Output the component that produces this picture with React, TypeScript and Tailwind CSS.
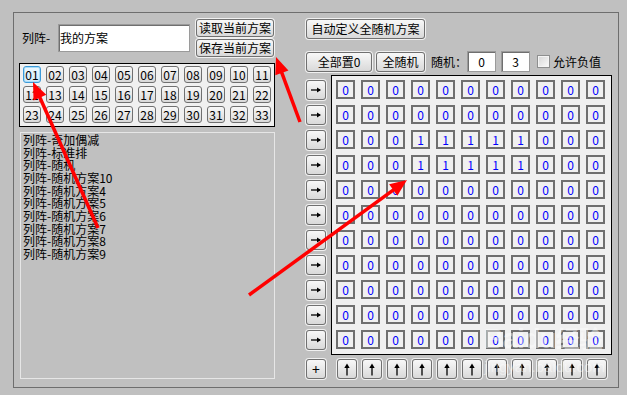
import React from 'react'

const FONT = "font-['SimSun','Noto_Sans_CJK_SC',sans-serif]"

const schemes = [
  '列阵-奇加偶减',
  '列阵-标准排',
  '列阵-随机',
  '列阵-随机方案10',
  '列阵-随机方案4',
  '列阵-随机方案5',
  '列阵-随机方案6',
  '列阵-随机方案7',
  '列阵-随机方案8',
  '列阵-随机方案9',
]

// rows 2 and 3 have a run of 1s in columns 3..7
const matrix: number[][] = Array.from({ length: 11 }, (_, r) =>
  Array.from({ length: 11 }, (_, c) => ((r === 2 || r === 3) && c >= 3 && c <= 7 ? 1 : 0))
)

interface BtnProps {
  className?: string
  focused?: boolean
  children?: React.ReactNode
}

const Btn: React.FC<BtnProps> = ({ className = '', focused = false, children }) => {
  const skin = focused
    ? 'border-[#3c9ad8] bg-linear-to-b from-[#eef8fe] to-[#cfeafb] shadow-[0_0_0_1px_#f2f2f2,inset_0_0_0_1px_#a9dcf8]'
    : 'border-[#707070] bg-linear-to-b from-[#f8f8f8] to-[#d9d9d9] shadow-[0_0_0_1px_#f0f0f0]'
  return (
    <div
      className={`flex items-center justify-center rounded-[3px] border text-[12px] leading-none text-black ${skin} ${className}`}
    >
      {children}
    </div>
  )
}

const RightArrow = () => (
  <svg width="12" height="8" viewBox="0 0 12 8">
    <path d="M1 4H10" stroke="#000" strokeWidth="1.3" />
    <path d="M7 1.5L11 4L7 6.5Z" fill="#000" />
  </svg>
)

const UpArrow = () => (
  <svg width="8" height="13" viewBox="0 0 8 13">
    <path d="M4 3V12.5" stroke="#000" strokeWidth="1.3" />
    <path d="M1.3 5L4 0.5L6.7 5Z" fill="#000" />
  </svg>
)

const RedArrow: React.FC<{ x1: number; y1: number; x2: number; y2: number }> = ({ x1, y1, x2, y2 }) => {
  const dx = x2 - x1
  const dy = y2 - y1
  const len = Math.sqrt(dx * dx + dy * dy)
  const ux = dx / len
  const uy = dy / len
  const head = 17
  const half = 7
  const bx = x2 - ux * head
  const by = y2 - uy * head
  const pts = `${x2},${y2} ${bx - uy * half},${by + ux * half} ${bx + uy * half},${by - ux * half}`
  return (
    <g>
      <line x1={x1} y1={y1} x2={bx + ux * 2} y2={by + uy * 2} stroke="#ff0000" strokeWidth="3.5" />
      <polygon points={pts} fill="#ff0000" />
    </g>
  )
}

export default function App() {
  return (
    <div className={`relative h-[395px] w-[627px] overflow-hidden bg-[#c0c0c0] pl-[13px] pt-[12px] ${FONT}`}>
      <div className="flex h-[376px] w-[606px] border border-[#6e6e6e]">
        {/* left column */}
        <div className="ml-[5px] flex w-[256px] flex-col pt-[6px]">
          <div className="flex h-[38px] items-center">
            <span className="w-[39px] pl-[3px] text-[12px] text-black">列阵-</span>
            <div className="flex h-[28px] w-[132px] items-center border border-[#9a9a9a] bg-white pl-[1px] text-[12px] text-black shadow-[inset_1px_1px_0_#6f6f6f]">
              我的方案
            </div>
            <div className="ml-[6px] flex flex-col gap-[2px]">
              <Btn className="h-[18px] w-[78px]">读取当前方案</Btn>
              <Btn className="h-[18px] w-[78px]">保存当前方案</Btn>
            </div>
          </div>

          <div className="mt-[6px] h-[64px] w-[256px] border border-black bg-[#f0f0f0] pl-[3px] pt-[2px]">
            <div className="grid grid-cols-[repeat(11,18px)] gap-x-[5px] gap-y-[3px]">
              {Array.from({ length: 33 }, (_, i) => (
                <Btn key={i} focused={i === 0} className="h-[17px] w-[18px]">
                  {String(i + 1).padStart(2, '0')}
                </Btn>
              ))}
            </div>
          </div>

          <div className="ml-[1px] mt-[5px] h-[247px] w-[255px] border border-[#e6e6e6] pl-[2px] pt-[1px] text-[12px] leading-[12.67px] text-black">
            {schemes.map((s) => (
              <div key={s}>{s}</div>
            ))}
          </div>
        </div>

        {/* right column */}
        <div className="ml-[31px] flex w-[306px] flex-col pt-[6px]">
          <Btn className="h-[20px] w-[119px]">自动定义全随机方案</Btn>

          <div className="mt-[12px] flex h-[21px] items-center">
            <Btn className="h-[20px] w-[66px]">全部置0</Btn>
            <Btn className="ml-[4px] h-[20px] w-[49px]">全随机</Btn>
            <span className="ml-[6px] w-[36px] text-[12px] text-black">随机：</span>
            <div className="flex h-[21px] w-[29px] items-center justify-center border border-[#9a9a9a] bg-white text-[12px] shadow-[inset_1px_1px_0_#6f6f6f]">
              0
            </div>
            <div className="ml-[5px] flex h-[21px] w-[29px] items-center justify-center border border-[#9a9a9a] bg-white text-[12px] shadow-[inset_1px_1px_0_#6f6f6f]">
              3
            </div>
            <div className="ml-[7px] h-[13px] w-[13px] border border-[#8e8f8f] bg-linear-to-br from-[#d6d6d6] to-[#fbfbfb] shadow-[inset_0_0_0_1px_#f4f4f4]" />
            <span className="ml-[3px] text-[12px] text-black">允许负值</span>
          </div>

          <div className="mt-[3px] flex">
            <div className="flex w-[20px] flex-col gap-[5px] pt-[5px]">
              {matrix.map((_, r) => (
                <Btn key={r} className="h-[20px] w-[20px]">
                  <RightArrow />
                </Btn>
              ))}
            </div>
            <div className="ml-[5px] h-[280px] w-[281px] border border-black bg-[#f0f0f0] pl-[4px] pt-[4px]">
              <div className="grid grid-cols-[repeat(11,19px)] gap-[6px]">
                {matrix.flatMap((row, r) =>
                  row.map((v, c) => (
                    <div
                      key={`${r}-${c}`}
                      className="flex h-[19px] w-[19px] items-center justify-center border-2 border-[#6f6f6f] text-[12px] leading-none text-[#0000ff]"
                    >
                      {v}
                    </div>
                  ))
                )}
              </div>
            </div>
          </div>

          <div className="mt-[4px] flex">
            <Btn className="h-[20px] w-[20px] text-[14px]">+</Btn>
            <div className="ml-[11px] flex gap-[5px]">
              {Array.from({ length: 11 }, (_, i) => (
                <Btn key={i} className="h-[20px] w-[20px]">
                  <UpArrow />
                </Btn>
              ))}
            </div>
          </div>
        </div>
      </div>

      {/* watermark */}
      <div className="pointer-events-none absolute left-[484px] top-[326px] flex flex-col items-start text-white/45">
        <span className="font-['Liberation_Sans',sans-serif] text-[27px] font-bold leading-none tracking-tight">
          Baidu<span className={`${FONT} text-[24px]`}>经验</span>
        </span>
        <span className="mt-[6px] font-['Liberation_Sans',sans-serif] text-[15px] leading-none">jingyan.baidu.com</span>
      </div>

      {/* annotation arrows */}
      <svg className="pointer-events-none absolute left-0 top-0" width="627" height="395">
        <RedArrow x1={98} y1={228} x2={33} y2={82} />
        <RedArrow x1={300} y1={122} x2={276} y2={57} />
        <RedArrow x1={249} y1={295} x2={407} y2={180} />
      </svg>
    </div>
  )
}
